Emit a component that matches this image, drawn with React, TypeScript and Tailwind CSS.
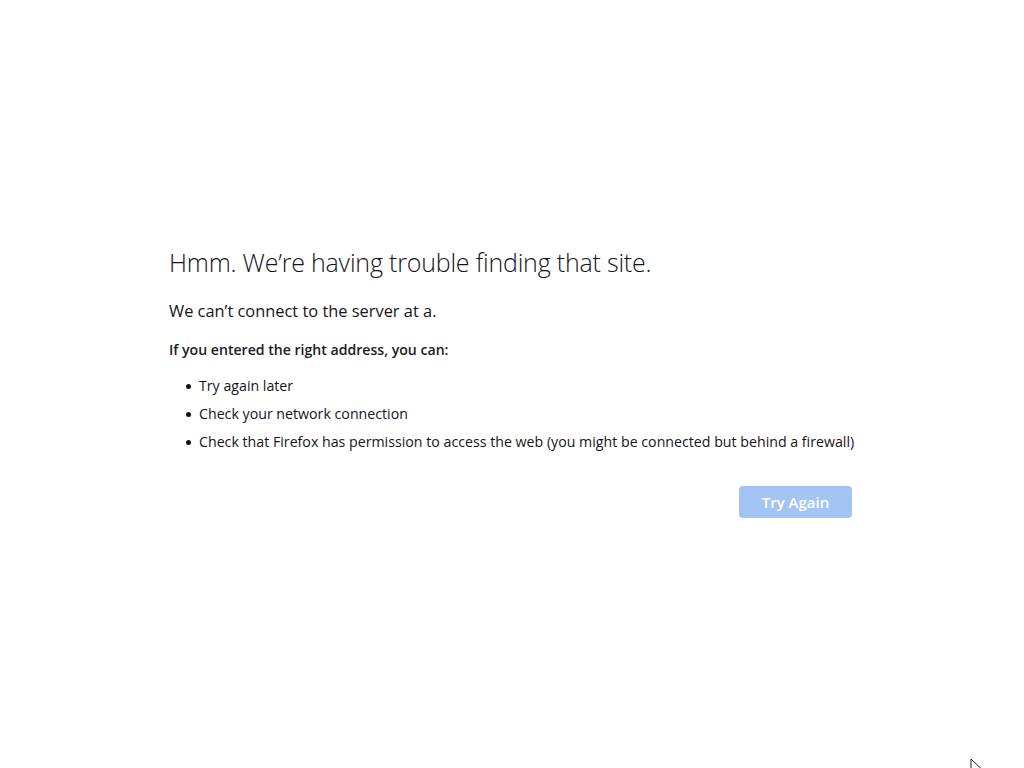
import React from "react";

export default function App() {
  const font = { fontFamily: '"Open Sans", "Noto Sans", sans-serif' };
  const bullet =
    "relative before:absolute before:left-[-13px] before:top-[8px] before:h-[5px] before:w-[5px] before:rounded-full before:bg-[#15141a] before:content-['']";
  return (
    <div className="relative min-h-screen w-full overflow-hidden bg-white text-[#15141a]" style={font}>
      <div className="mx-auto w-[686px] pt-[244px]">
        <h1 className="text-[25px] font-light leading-[36px] tracking-[-0.2px]">
          Hmm. We’re having trouble finding that site.
        </h1>
        <p className="mt-[19px] text-[16.4px] leading-[24px]">
          We can’t connect to the server at a.
        </p>
        <p className="mt-[16px] text-[14.1px] font-semibold leading-[22px] text-[#1c1b22]">
          If you entered the right address, you can:
        </p>
        <ul className="mt-[15px] pl-[30px] text-[14.2px] leading-[20px]">
          <li className={`${bullet} mb-[8px]`}>Try again later</li>
          <li className={`${bullet} mb-[8px]`}>Check your network connection</li>
          <li className={bullet}>
            Check that Firefox has permission to access the web (you might be connected but behind a firewall)
          </li>
        </ul>
        <div className="mt-[34px] flex justify-end pr-[3px]">
          <button className="h-[32px] w-[113px] rounded-[4px] bg-[#a3c4f5] text-[15px] font-semibold text-white">
            Try Again
          </button>
        </div>
      </div>
      <svg
        className="absolute left-[970px] top-[758px]"
        width="14"
        height="20"
        viewBox="0 0 14 20"
      >
        <path d="M1 1 L1 15 L4.5 11.5 L7 17 L9 16 L6.5 10.5 L11 10.5 Z" fill="#fff" stroke="#222" strokeWidth="1" />
      </svg>
    </div>
  );
}
